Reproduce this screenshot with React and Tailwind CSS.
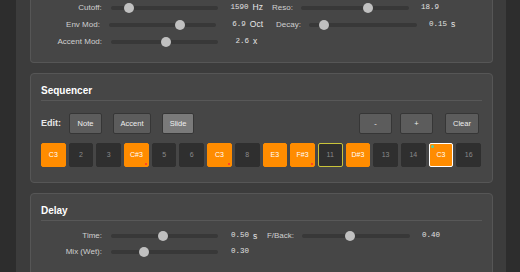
import React from 'react';

const ORANGE = 'bg-[#ff8c00]';

function Slider({ width, pos }) {
  return (
    <div className={`relative h-[4px] rounded-full bg-[#383838] ${width}`}>
      <div
        className="absolute top-1/2 h-[10px] w-[10px] -translate-y-1/2 rounded-full bg-[#c0c0c0]"
        style={{ left: `calc(${pos} * (100% - 10px))` }}
      />
    </div>
  );
}

function Value({ value, unit, width }) {
  return (
    <>
      <span className={`${width} text-right font-['Liberation_Mono',monospace] text-[7.5px] text-[#e0e0e0]`}>
        {value}
      </span>
      {unit && <span className="ml-[4px] text-[8.5px] text-[#e6e6e6]">{unit}</span>}
    </>
  );
}

function ParamRow({ left, right, rowH = 'h-[17px]' }) {
  return (
    <div className={`flex items-center ${rowH}`}>
      <div className="flex w-[222px] items-center">
        <span className="w-[61px] text-right text-[8px] text-[#d0d0d0]">{left.label}</span>
        <div className="ml-[9px]">
          <Slider width="w-[107px]" pos={left.pos} />
        </div>
        <Value value={left.value} unit={left.unit} width="w-[31px]" />
      </div>
      {right && (
        <div className="flex items-center">
          <span className={`${right.labelW} text-right text-[8px] text-[#d0d0d0]`}>{right.label}</span>
          <div className="ml-[8px]">
            <Slider width="w-[108px]" pos={right.pos} />
          </div>
          <Value value={right.value} unit={right.unit} width="w-[30px]" />
        </div>
      )}
    </div>
  );
}

function Btn({ children, active, w }) {
  return (
    <button
      className={`flex h-[21px] ${w} items-center justify-center rounded-[2px] border border-[#363636] text-[7.5px] text-[#eeeeee] ${
        active ? 'bg-[#7a7a7a]' : 'bg-[#5c5c5c]'
      }`}
    >
      {children}
    </button>
  );
}

const steps = [
  { note: 'C3', on: true },
  { n: 2 },
  { n: 3 },
  { note: 'C#3', on: true, accent: true },
  { n: 5 },
  { n: 6 },
  { note: 'C3', on: true, accent: true },
  { n: 8 },
  { note: 'E3', on: true },
  { note: 'F#3', on: true, accent: true },
  { n: 11, cursor: true },
  { note: 'D#3', on: true },
  { n: 13 },
  { n: 14 },
  { note: 'C3', on: true, current: true, slide: true },
  { n: 16 },
];

function Step({ s }) {
  let cls = 'bg-[#2f2f2f] text-[#8a8a8a] border border-[#2f2f2f]';
  if (s.on) cls = `${ORANGE} text-white border border-[#ff8c00]`;
  if (s.current) cls = `${ORANGE} text-white border border-white`;
  if (s.cursor) cls = 'bg-[#2f2f2f] text-[#8a8a8a] border border-[#c9c33a]';
  return (
    <div className={`relative flex h-[24px] flex-1 items-center justify-center rounded-[2px] text-[7px] ${cls}`}>
      {s.on ? s.note : s.n}
      {s.accent && <span className="absolute bottom-[1px] right-[1px] h-[2px] w-[2px] rounded-full bg-[#ff3030]" />}
      {s.slide && <span className="absolute left-[1px] top-[1px] h-[3px] w-[3px] rounded-full bg-[#4fd1a5]" />}
    </div>
  );
}

function Panel({ title, children, className = '' }) {
  return (
    <div className={`rounded-[4px] border border-[#565656] bg-[#464646] px-[10px] ${className}`}>
      {title && (
        <div className="border-b border-[#585858] pb-[2px] pt-[10px] text-[10px] font-bold leading-[14px] text-white">
          {title}
        </div>
      )}
      {children}
    </div>
  );
}

export default function App() {
  return (
    <div className="h-screen overflow-hidden bg-[#2d2d2d] font-['Liberation_Sans',Arial,sans-serif]">
      <div className="ml-[16px] flex min-h-screen w-[490px] flex-col gap-[10px] bg-[#3c3c3c] pl-[14px] pr-[13px]">
        {/* Synth panel (top scrolled off) */}
        <div className="rounded-b-[4px] border border-t-0 border-[#565656] bg-[#464646] px-[10px] pb-[12px]">
          <div className="-mt-[1px]">
            <ParamRow
              left={{ label: 'Cutoff:', pos: 0.134, value: '1590', unit: 'Hz' }}
              right={{ label: 'Reso:', labelW: 'w-[30px]', pos: 0.633, value: '18.9' }}
            />
            <ParamRow
              left={{ label: 'Env Mod:', pos: 0.68, value: '6.9', unit: 'Oct' }}
              right={{ label: 'Decay:', labelW: 'w-[38px]', pos: 0.1, value: '0.15', unit: 's' }}
            />
            <ParamRow left={{ label: 'Accent Mod:', pos: 0.515, value: '2.6', unit: 'x' }} />
          </div>
        </div>

        {/* Sequencer */}
        <Panel title="Sequencer" className="pb-[15px]">
          <div className="mt-[12px] flex items-center pr-[3px]">
            <span className="text-[9px] font-bold text-[#e8e8e8]">Edit:</span>
            <div className="ml-[8px] flex gap-[11px]">
              <Btn w="w-[33px]">Note</Btn>
              <Btn w="w-[38px]">Accent</Btn>
              <Btn w="w-[32px]" active>Slide</Btn>
            </div>
            <div className="ml-auto flex gap-[8px]">
              <Btn w="w-[33px]">-</Btn>
              <Btn w="w-[33px]">+</Btn>
            </div>
            <div className="ml-[12px]">
              <Btn w="w-[34px]">Clear</Btn>
            </div>
          </div>
          <div className="mt-[9px] flex gap-[3px] pr-[1px]">
            {steps.map((s, i) => (
              <Step key={i} s={s} />
            ))}
          </div>
        </Panel>

        {/* Delay */}
        <Panel title="Delay" className="pb-[40px]">
          <div className="mt-[7px]">
            <ParamRow
              rowH="h-[16px]"
              left={{ label: 'Time:', pos: 0.485, value: '0.50', unit: 's' }}
              right={{ label: 'F/Back:', labelW: 'w-[31px]', pos: 0.44, value: '0.40' }}
            />
            <ParamRow rowH="h-[16px]" left={{ label: 'Mix (Wet):', pos: 0.29, value: '0.30' }} />
          </div>
        </Panel>
      </div>
    </div>
  );
}
